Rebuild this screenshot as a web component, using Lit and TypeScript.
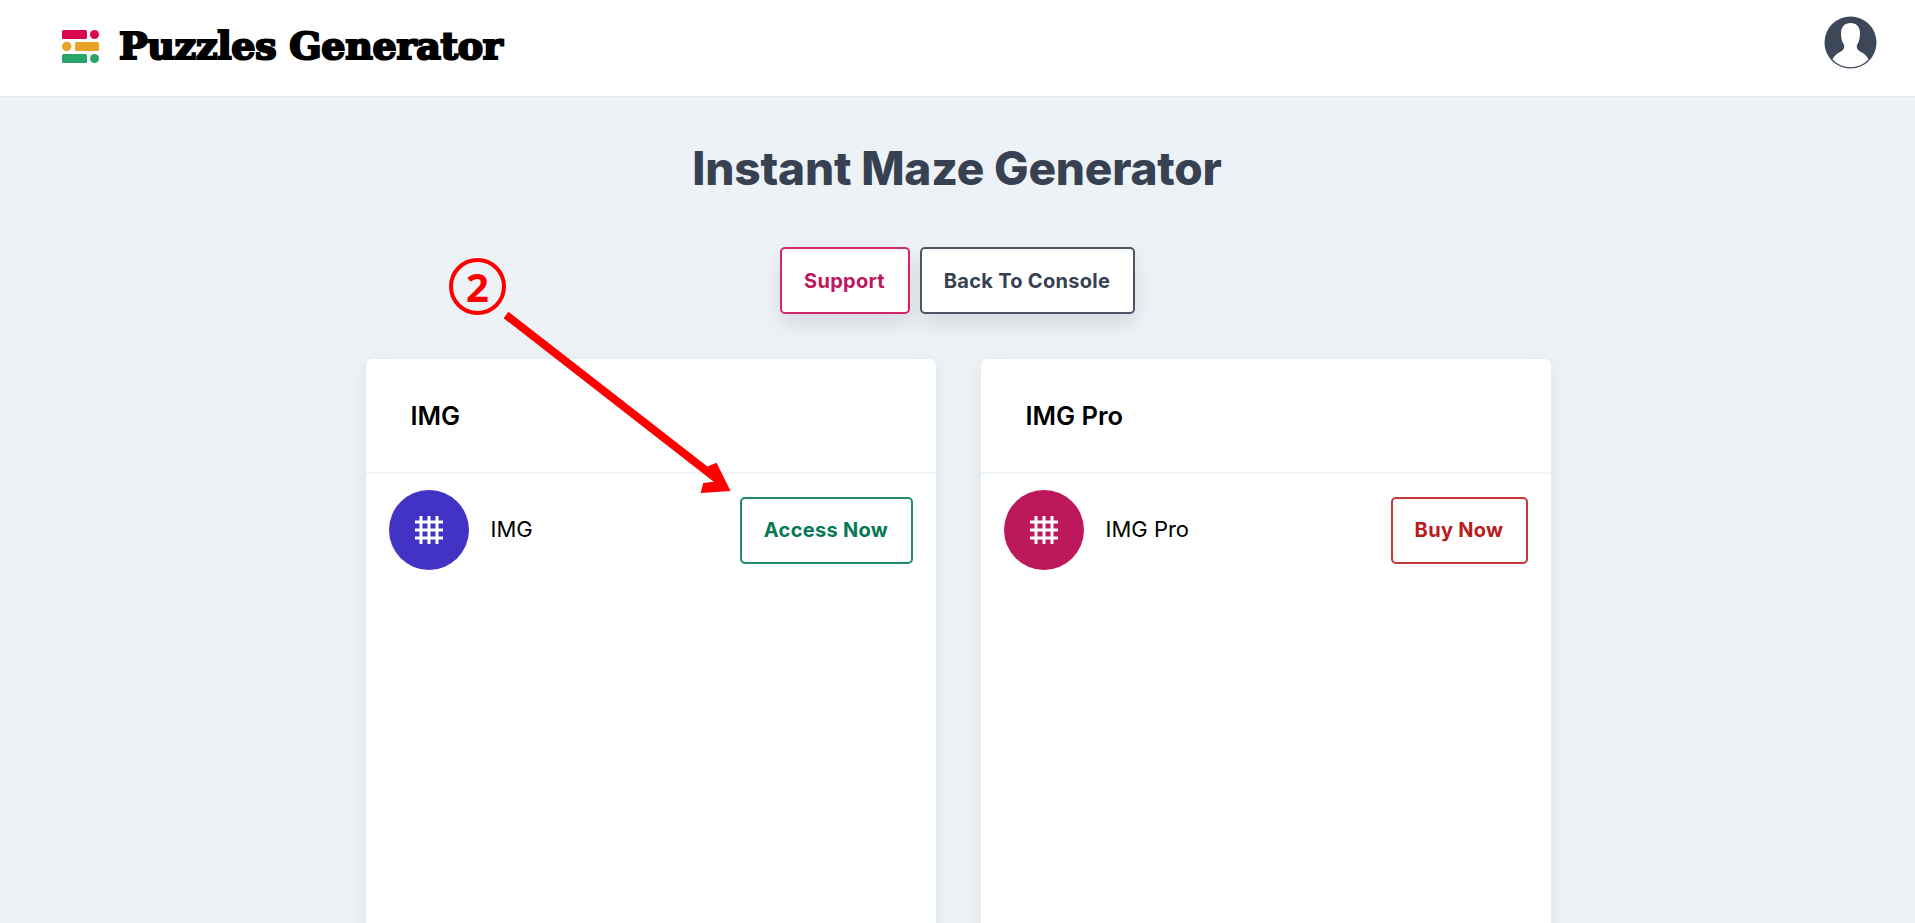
import { LitElement, html, css, svg } from "lit";
import { customElement } from "lit/decorators.js";

const gridIcon = html`<svg class="grid" viewBox="0 0 28 28" fill="none" stroke="#fff" stroke-width="3">
  <path d="M6 0v28M14 0v28M22 0v28M0 6h28M0 14h28M0 22h28"></path></svg>`;

@customElement("app-root")
export class AppRoot extends LitElement {
  static styles = css`
    :host { display: block; position: relative; height: 923px; overflow: hidden; background: #edf2f7; font-family: Inter, "Liberation Sans", sans-serif; }
    header { height: 96px; background: #fff; border-bottom: 1px solid #e2e8f0; display: flex; align-items: center; justify-content: space-between; padding: 0 38px 0 62px; }
    .brand { display: flex; align-items: center; gap: 20px; padding-bottom: 4px; }
    .brand-name { font-family: "DejaVu Serif", serif; font-weight: 700; font-size: 38px; line-height: 40px; color: #000; -webkit-text-stroke: 2.2px #000; letter-spacing: -0.3px; }
    .logo { width: 37px; height: 33px; display: block; }
    .avatar { width: 53px; height: 53px; display: block; margin-bottom: 11px; }
    main { display: flex; flex-direction: column; align-items: center; margin-left: 1px; }
    h1 { margin: 38px 0 0; font-size: 46px; line-height: 66px; font-weight: 800; letter-spacing: -0.2px; color: #374151; margin-left: -2px; }
    .actions { display: flex; gap: 10px; margin-top: 46px; margin-left: -2px; }
    .btn { box-sizing: border-box; height: 67px; display: flex; align-items: center; justify-content: center; background: #fff; border: 2px solid; border-radius: 5px; font-size: 20px; font-weight: 700; letter-spacing: .3px; white-space: nowrap; }
    .actions .btn { box-shadow: 0 10px 20px rgba(0,0,0,.1); }
    .support { width: 130px; color: #be185d; border-color: #d0286e; }
    .back { width: 215px; color: #374151; border-color: #4b5563; }
    .cards { display: grid; grid-template-columns: 570px 570px; gap: 45px; margin-top: 45px; }
    .card { background: #fff; border-radius: 6px; height: 600px; box-shadow: 0 4px 20px rgba(0,0,0,.07); }
    .card-head { box-sizing: border-box; height: 115px; padding: 0 45px; border-bottom: 2px solid #f1f4f8; display: flex; align-items: center; font-size: 25.5px; font-weight: 600; color: #000; }
    .row { display: flex; align-items: center; padding: 16px 23px; }
    .circle { width: 80px; height: 80px; border-radius: 50%; display: flex; align-items: center; justify-content: center; flex: none; }
    .grid { width: 28px; height: 28px; }
    .indigo { background: #4333c5; }
    .pink { background: #be185d; }
    .name { margin-left: 22px; flex: 1; font-size: 22px; color: #000; font-weight: 400; padding-bottom: 2px; }
    .row .btn { height: 67px; }
    .access { width: 173px; color: #047857; border-color: #218a6b; }
    .buy { width: 137px; color: #b91c1c; border-color: #c43a3a; }
    .note { position: absolute; left: 449px; top: 258px; width: 57px; height: 57px; box-sizing: border-box; border: 4px solid #f00; border-radius: 50%; display: flex; align-items: center; justify-content: center; color: #f00; font-family: "Noto Sans", sans-serif; font-weight: 700; font-size: 40px; line-height: 1; }
    .arrow { position: absolute; left: 500px; top: 310px; width: 240px; height: 190px; pointer-events: none; }
  `;

  render() {
    return html`
      <header>
        <div class="brand">
          <svg class="logo" viewBox="0 0 37 33">
            <rect x="0" y="0" width="25" height="9" rx="1.5" fill="#d9074f"></rect><circle cx="32.5" cy="4.5" r="4.5" fill="#d9074f"></circle>
            <circle cx="4.7" cy="16.5" r="4.7" fill="#e8a427"></circle><rect x="13" y="12" width="24" height="9" rx="1.5" fill="#e8a427"></rect>
            <rect x="0" y="24" width="25" height="9" rx="1.5" fill="#27a468"></rect><circle cx="32.5" cy="28.5" r="4.5" fill="#27a468"></circle>
          </svg>
          <span class="brand-name">Puzzles Generator</span>
        </div>
        <svg class="avatar" viewBox="0 0 53 53">
          <circle cx="26.5" cy="26.5" r="26" fill="#3c4858"></circle>
          <path d="M26.5 7c-6 0-9.500 4-9.500 10 0 5 1 9 3 12 1 3-1 6-4 7-3 1.500-6 4-7.500 7.500a25 25 0 0 0 36 0c-1.500-3.500-4.500-6-7.500-7.500-3-1-5-4-4-7 2-3 3-7 3-12 0-6-3.500-10-9.500-10z" fill="#fff"></path>
        </svg>
      </header>
      <main>
        <h1>Instant Maze Generator</h1>
        <div class="actions">
          <div class="btn support">Support</div>
          <div class="btn back">Back To Console</div>
        </div>
        <div class="cards">
          <section class="card">
            <div class="card-head">IMG</div>
            <div class="row">
              <div class="circle indigo">${gridIcon}</div>
              <div class="name">IMG</div>
              <div class="btn access">Access Now</div>
            </div>
          </section>
          <section class="card">
            <div class="card-head">IMG Pro</div>
            <div class="row">
              <div class="circle pink">${gridIcon}</div>
              <div class="name">IMG Pro</div>
              <div class="btn buy">Buy Now</div>
            </div>
          </section>
        </div>
      </main>
      <div class="note">2</div>
      <svg class="arrow" viewBox="0 0 240 190">
        ${svg`<path d="M6 5L222 173" stroke="#f00" stroke-width="8" fill="none"></path><path d="M216 154L229 180L202 182L204 174L221 172L209 157z" fill="#f00" stroke="#f00" stroke-width="2"></path>`}
      </svg>
    `;
  }
}
